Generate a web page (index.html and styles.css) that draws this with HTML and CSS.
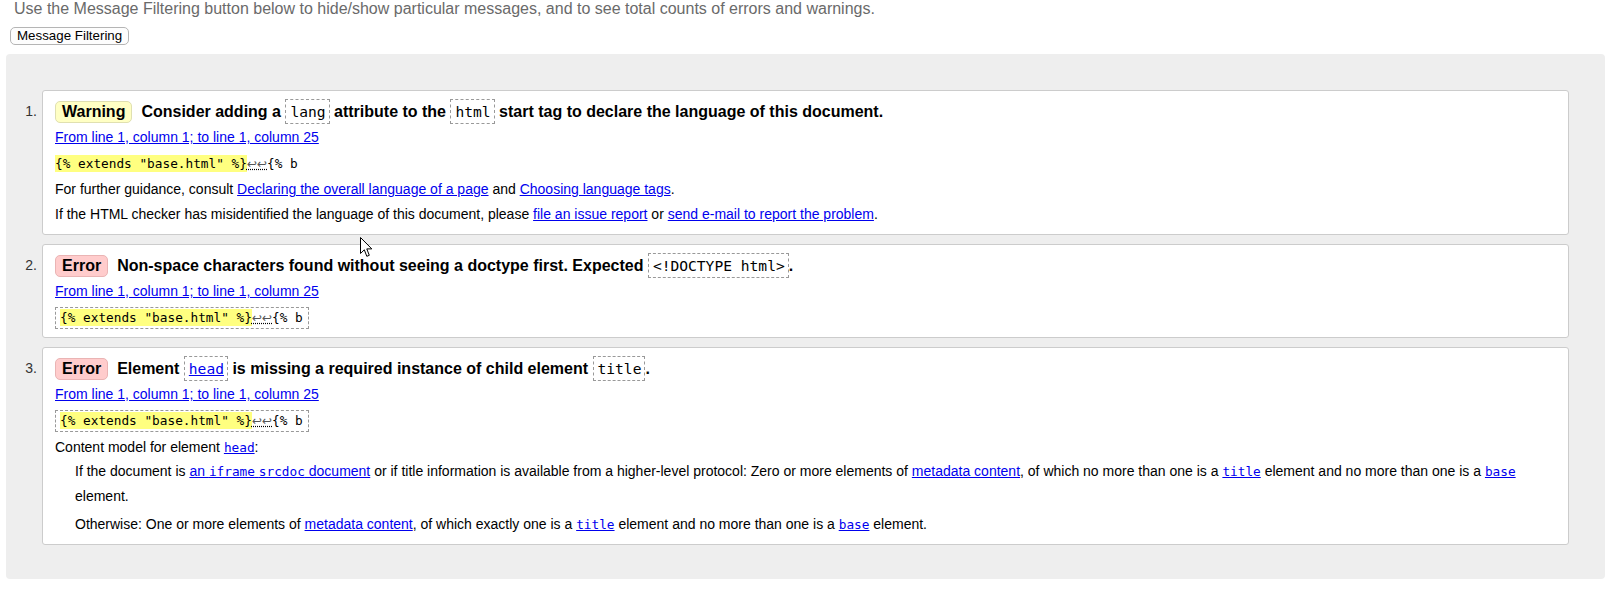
FILE: index.html
```html
<!DOCTYPE html>
<html lang="en">
<head>
<meta charset="utf-8">
<title>Messages</title>
<link rel="stylesheet" href="styles.css">
</head>
<body>
<p class="intro">Use the Message Filtering button below to hide/show particular messages, and to see total counts of errors and warnings.</p>
<button class="filter-btn" type="button">Message Filtering</button>
<div class="results">
  <ol class="messages">
    <li class="msg">
      <span class="num">1.</span>
      <div class="card">
        <p class="title"><strong class="badge warning">Warning</strong><span>Consider adding a <code class="tcode">lang</code> attribute to the <code class="tcode">html</code> start tag to declare the language of this document.</span></p>
        <p class="line"><a href="#">From line 1, column 1; to line 1, column 25</a></p>
        <p class="extract"><code class="ecode"><mark class="hl">{% extends "base.html" %}</mark><span class="lf">↩↩</span>{% b</code></p>
        <p class="line">For further guidance, consult <a href="#">Declaring the overall language of a page</a> and <a href="#">Choosing language tags</a>.</p>
        <p class="line">If the HTML checker has misidentified the language of this document, please <a href="#">file an issue report</a> or <a href="#">send e-mail to report the problem</a>.</p>
      </div>
    </li>
    <li class="msg">
      <span class="num">2.</span>
      <div class="card">
        <p class="title"><strong class="badge error">Error</strong><span>Non-space characters found without seeing a doctype first. Expected <code class="tcode">&lt;!DOCTYPE html&gt;</code>.</span></p>
        <p class="line"><a href="#">From line 1, column 1; to line 1, column 25</a></p>
        <p class="extract"><code class="ecode boxed"><mark class="hl">{% extends "base.html" %}</mark><span class="lf">↩↩</span>{% b</code></p>
      </div>
    </li>
    <li class="msg">
      <span class="num">3.</span>
      <div class="card">
        <p class="title"><strong class="badge error">Error</strong><span>Element <code class="tcode"><a href="#">head</a></code> is missing a required instance of child element <code class="tcode">title</code>.</span></p>
        <p class="line"><a href="#">From line 1, column 1; to line 1, column 25</a></p>
        <p class="extract"><code class="ecode boxed"><mark class="hl">{% extends "base.html" %}</mark><span class="lf">↩↩</span>{% b</code></p>
        <p class="model">Content model for element <a href="#"><code class="icode">head</code></a>:</p>
        <p class="detail">If the document is <a href="#">an <code class="icode">iframe</code> <code class="icode">srcdoc</code> document</a> or if title information is available from a higher-level protocol: Zero or more elements of <a href="#">metadata content</a>, of which no more than one is a <a href="#"><code class="icode">title</code></a> element and no more than one is a <a href="#"><code class="icode">base</code></a> element.</p>
        <p class="detail detail-last">Otherwise: One or more elements of <a href="#">metadata content</a>, of which exactly one is a <a href="#"><code class="icode">title</code></a> element and no more than one is a <a href="#"><code class="icode">base</code></a> element.</p>
      </div>
    </li>
  </ol>
</div>
<svg class="cursor" width="13" height="21" viewBox="0 0 13 21" aria-hidden="true"><path d="M0.5 0.5 L0.5 16.5 L4.3 12.8 L6.8 19.3 L9.3 18.3 L6.8 11.9 L11.8 11.9 Z" fill="#fff" stroke="#000" stroke-width="1" stroke-linejoin="miter"/></svg>
</body>
</html>
```
FILE: styles.css
```css
* { box-sizing: border-box; }
html, body { margin: 0; padding: 0; background: #fff; }
body {
  font-family: "Liberation Sans", Arial, sans-serif;
  font-size: 14px;
  color: #000;
  position: relative;
}
a { color: #0000ee; text-decoration: underline; }

.intro {
  margin: 0 0 0 14px;
  font-size: 16px;
  line-height: 18px;
  color: #6a6a6a;
}
.filter-btn {
  display: block;
  margin: 9px 0 0 10px;
  font-family: "Liberation Sans", Arial, sans-serif;
  font-size: 13.33px;
  line-height: 14px;
  padding: 1px 6px;
  border: 1px solid #b5b5b5;
  border-radius: 5px;
  background: #fdfdfd;
  color: #000;
}
.results {
  margin: 9px 5px 0 6px;
  background: #eee;
  border-radius: 4px;
  padding: 36px 36px 34px 0;
}
.messages {
  list-style: none;
  margin: 0;
  padding: 0;
  display: flex;
  flex-direction: column;
  gap: 9px;
}
.msg {
  display: grid;
  grid-template-columns: 36px 1fr;
}
.num {
  text-align: right;
  padding: 8px 5px 0 0;
  line-height: 27px;
  color: #333;
}
.card {
  background: #fff;
  border: 1px solid #ccc;
  border-radius: 3px;
  padding: 7px 12px;
}
.card p { margin: 0; }
.title {
  font-size: 16px;
  font-weight: bold;
  line-height: 27px;
}
.badge {
  display: inline-block;
  vertical-align: middle;
  margin: -2px 9px 0 0;
  padding: 0 6px;
  line-height: 20px;
  border: 1px solid;
  border-radius: 5px;
  font-weight: bold;
}
.warning { background: #ffffc4; border-color: #e0e0b0; }
.error { background: #ffcccc; border-color: #eab4b4; }
.tcode {
  display: inline-block;
  vertical-align: middle;
  margin-top: -2px;
  font-family: "DejaVu Sans Mono", "Liberation Mono", monospace;
  font-size: 14.6px;
  font-weight: normal;
  line-height: 23px;
  padding: 0 3px 0 4px;
  border: 1px dashed #999;
}
.line { line-height: 25px; }
.extract { line-height: 26px; }
.ecode {
  font-family: "DejaVu Sans Mono", "Liberation Mono", monospace;
  font-size: 12.75px;
  color: #000;
}
.ecode.boxed {
  display: inline-block;
  vertical-align: middle;
  line-height: 20px;
  padding: 0 5px 0 4px;
  border: 1px dashed #999;
}
.hl {
  background: #ffff80;
  color: #000;
  padding: 1px 0;
}
.lf {
  font-family: "DejaVu Sans", sans-serif;
  font-size: 12px;
  color: #555;
  text-decoration: underline dotted #000;
}
.icode {
  font-family: "DejaVu Sans Mono", "Liberation Mono", monospace;
  font-size: 12.75px;
}
.model {
  margin-top: 3px !important;
  line-height: 23px;
}
.detail {
  margin-left: 20px !important;
  line-height: 24px;
}
.detail-last {
  margin-top: 4px !important;
  line-height: 25px;
}
.cursor {
  position: absolute;
  left: 360px;
  top: 237px;
}
```
